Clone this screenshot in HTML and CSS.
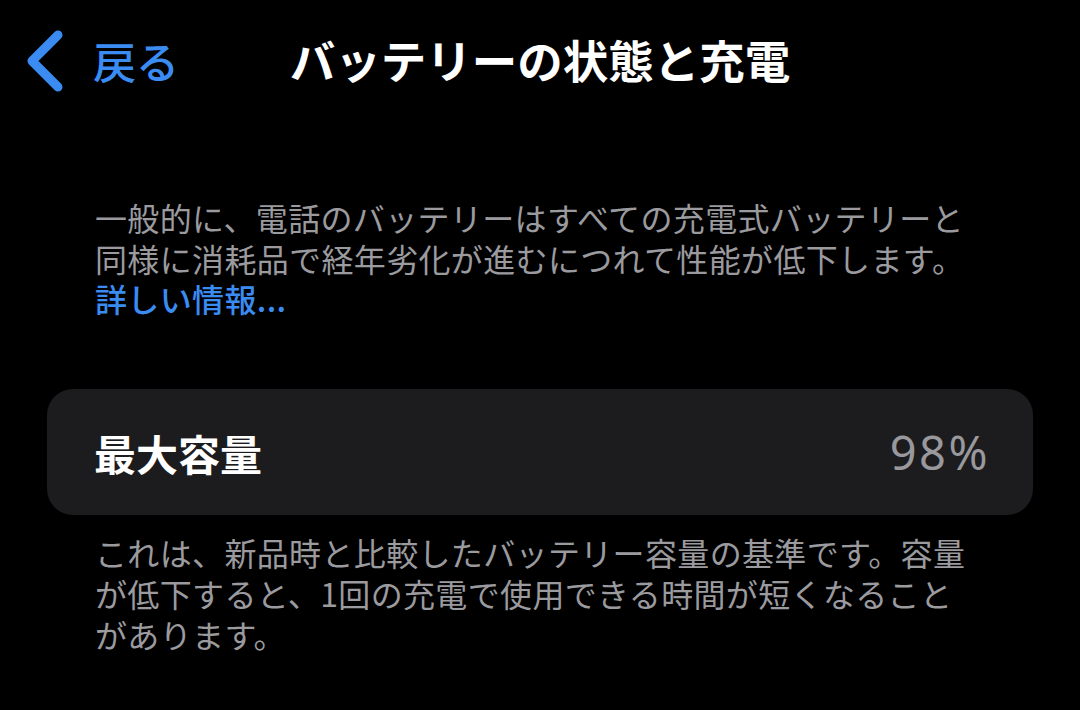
FILE: index.html
```html
<!DOCTYPE html>
<html lang="ja">
<head>
<meta charset="utf-8">
<link rel="stylesheet" href="styles.css">
</head>
<body>
<header class="nav">
  <a class="back" href="#">
    <svg class="chev" width="40" height="64" viewBox="0 0 40 64"><path d="M34 7 L8 33 L34 59" fill="none" stroke="#3a8cf3" stroke-width="9" stroke-linecap="round" stroke-linejoin="round"/></svg>
    <span class="back-label">戻る</span>
  </a>
  <h1 class="title">バッテリーの状態と充電</h1>
  <div class="spacer"></div>
</header>
<main class="content">
  <p class="note intro">一般的に、電話のバッテリーはすべての充電式バッテリーと同様に消耗品で経年劣化が進むにつれて性能が低下します。</p>
  <a class="note link" href="#">詳しい情報...</a>
  <section class="card">
    <span class="card-label">最大容量</span>
    <span class="card-value">98%</span>
  </section>
  <p class="note footer">これは、新品時と比較したバッテリー容量の基準です。容量が低下すると、1回の充電で使用できる時間が短くなることがあります。</p>
</main>
</body>
</html>
```

FILE: styles.css
```css
html, body {
  margin: 0;
  padding: 0;
  background: #000;
  width: 1080px;
  height: 710px;
  overflow: hidden;
  font-family: "Noto Sans CJK JP", "Noto Sans", sans-serif;
}
.nav {
  display: grid;
  grid-template-columns: 1fr auto 1fr;
  align-items: center;
  height: 120px;
}
.back {
  display: flex;
  align-items: center;
  gap: 29px;
  padding-left: 24px;
  text-decoration: none;
  color: #3a8cf3;
}
.chev { display: block; }
.back-label {
  font-size: 43px;
  font-weight: 500;
  line-height: 1;
}
.title {
  margin: 0;
  color: #fff;
  font-size: 45.5px;
  font-weight: 700;
  line-height: 1;
  white-space: nowrap;
}
.content {
  padding-top: 77px;
}
.note {
  display: block;
  margin: 0;
  padding-left: 95px;
  width: 885px;
  color: #9a9a9f;
  font-size: 32px;
  letter-spacing: 0.35px;
  line-height: 41px;
}
.intro {
  line-height: 40.5px;
}
.link {
  color: #3a8cf3;
  text-decoration: none;
  font-weight: 500;
  line-height: 40px;
}
.card {
  margin: 71px 47px 0;
  height: 126px;
  border-radius: 26px;
  background: #1c1c1e;
  display: flex;
  align-items: center;
  justify-content: space-between;
  padding: 0 43px 0 47px;
}
.card-label {
  color: #fff;
  font-size: 42px;
  font-weight: 700;
}
.card-value {
  color: #98989d;
  font-family: "Noto Sans", sans-serif;
  font-size: 47px;
  letter-spacing: 2.5px;
}
.footer {
  margin-top: 17px;
}
```
